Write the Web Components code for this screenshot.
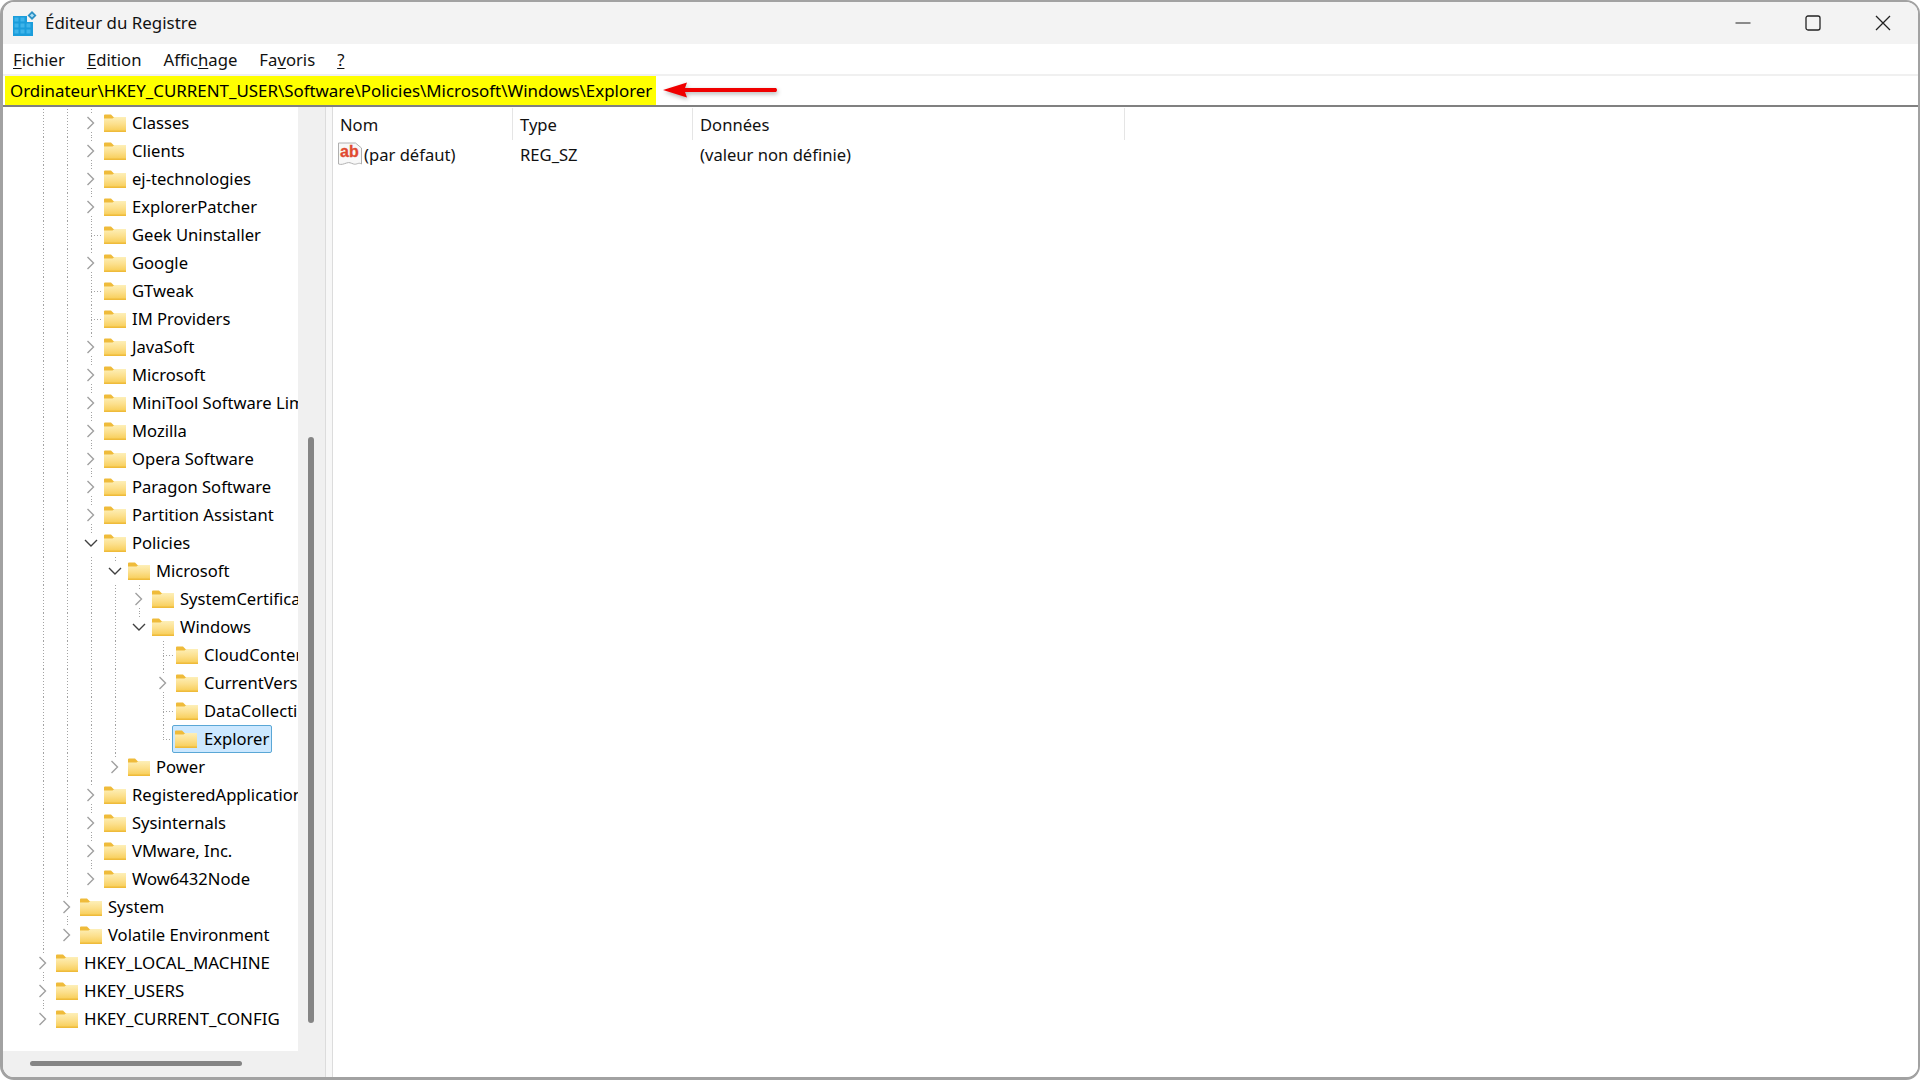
<!DOCTYPE html>
<html lang="fr">
<head>
<meta charset="utf-8">
<title>Éditeur du Registre</title>
<style>
  html, body { margin: 0; height: 100%; background: #fff; }
  body { font: 16.6px "Noto Sans", "Liberation Sans", sans-serif; color: #000; overflow: hidden; }
</style>
</head>
<body>

<reg-window>
  <reg-titlebar slot="top">Éditeur du Registre</reg-titlebar>
  <reg-menubar slot="top"></reg-menubar>
  <reg-address slot="top">Ordinateur\HKEY_CURRENT_USER\Software\Policies\Microsoft\Windows\Explorer</reg-address>
  <reg-tree slot="tree">
    <reg-key cells="vvc">Classes</reg-key>
    <reg-key cells="vvc">Clients</reg-key>
    <reg-key cells="vvc">ej-technologies</reg-key>
    <reg-key cells="vvc">ExplorerPatcher</reg-key>
    <reg-key cells="vvt">Geek Uninstaller</reg-key>
    <reg-key cells="vvc">Google</reg-key>
    <reg-key cells="vvt">GTweak</reg-key>
    <reg-key cells="vvt">IM Providers</reg-key>
    <reg-key cells="vvc">JavaSoft</reg-key>
    <reg-key cells="vvc">Microsoft</reg-key>
    <reg-key cells="vvc">MiniTool Software Limited</reg-key>
    <reg-key cells="vvc">Mozilla</reg-key>
    <reg-key cells="vvc">Opera Software</reg-key>
    <reg-key cells="vvc">Paragon Software</reg-key>
    <reg-key cells="vvc">Partition Assistant</reg-key>
    <reg-key cells="vvo">Policies</reg-key>
    <reg-key cells="vvvo">Microsoft</reg-key>
    <reg-key cells="vvvvc">SystemCertificates</reg-key>
    <reg-key cells="vvvvo">Windows</reg-key>
    <reg-key cells="vvvv_t">CloudContent</reg-key>
    <reg-key cells="vvvv_c">CurrentVersion</reg-key>
    <reg-key cells="vvvv_t">DataCollection</reg-key>
    <reg-key cells="vvvv_l" selected>Explorer</reg-key>
    <reg-key cells="vvve">Power</reg-key>
    <reg-key cells="vvc">RegisteredApplications</reg-key>
    <reg-key cells="vvc">Sysinternals</reg-key>
    <reg-key cells="vvc">VMware, Inc.</reg-key>
    <reg-key cells="vve">Wow6432Node</reg-key>
    <reg-key cells="vc">System</reg-key>
    <reg-key cells="ve">Volatile Environment</reg-key>
    <reg-key cells="c" wide>HKEY_LOCAL_MACHINE</reg-key>
    <reg-key cells="c" wide>HKEY_USERS</reg-key>
    <reg-key cells="e" wide>HKEY_CURRENT_CONFIG</reg-key>
  </reg-tree>
  <reg-values slot="list"></reg-values>
</reg-window>

<script>
  /* window frame: top bars, then tree and list side by side */
  class RegWindow extends HTMLElement {
    constructor () {
      super();
      this.attachShadow({ mode: 'open' }).innerHTML = `
        <style>
          :host { display: flex; flex-direction: column; box-sizing: border-box; width: 1920px; height: 1080px;
            border: solid #a2a2a2; border-width: 2px 2px 3px 3px; border-radius: 14px; overflow: hidden; background: #fff; }
          .body { flex: 1; display: flex; min-height: 0; }
          .split { width: 8px; box-sizing: border-box; background: #f7f7f7; border: solid #dcdcdc; border-width: 0 1px; }
          .arrow { position: absolute; left: 660px; top: 78px; filter: drop-shadow(1px 2px 2px rgba(0,0,0,.3)); }
        </style>
        <slot name="top"></slot>
        <div class="body">
          <slot name="tree"></slot>
          <div class="split"></div>
          <slot name="list"></slot>
        </div>
        <svg class="arrow" width="122" height="24" viewBox="0 0 122 24">
          <path d="M3 12 L27 4.5 L25 10 L116 10 Q118 12 116 14 L25 14 L27 19.5 Z" fill="#f00000"/>
        </svg>`;
    }
  }

  class RegTitlebar extends HTMLElement {
    constructor () {
      super();
      this.attachShadow({ mode: 'open' }).innerHTML = `
        <style>
          :host { display: flex; align-items: center; height: 42px; background: #f3f3f3; padding-left: 10px; font-size: 16.9px; color: #111; }
          .logo { margin-right: 8px; }
          .title { flex: 1; position: relative; top: -1px; }
          .btn { width: 70px; height: 42px; display: flex; align-items: center; justify-content: center; }
        </style>
        <svg class="logo" width="24" height="26" viewBox="0 0 24 26">
          <path d="M0 6h14v6h6v14H0z" fill="#1b9ddb"/>
          <path d="M1.5 7.5h4v4h-4zM7.5 7.5h4v4h-4zM1.5 13.5h4v4h-4zM7.5 13.5h4v4h-4zM13.5 13.5h4v4h-4zM1.5 19.5h4v4h-4zM7.5 19.5h4v4h-4zM13.5 19.5h4v4h-4z" fill="#3fb4ea"/>
          <path d="M19 1l4.5 4.5L19 10l-4.5-4.5z" fill="#2a8fc4"/>
          <path d="M19 3.4l2.1 2.1L19 7.6l-2.1-2.1z" fill="#a9def5"/>
        </svg>
        <span class="title"><slot></slot></span>
        <span class="btn"><svg width="16" height="16" viewBox="0 0 16 16"><path d="M.5 8h15" stroke="#222" stroke-width="1.2"/></svg></span>
        <span class="btn"><svg width="16" height="16" viewBox="0 0 16 16"><rect x="1" y="1" width="14" height="14" rx="2" fill="none" stroke="#222" stroke-width="1.3"/></svg></span>
        <span class="btn"><svg width="16" height="16" viewBox="0 0 16 16"><path d="M1 1l14 14M15 1L1 15" stroke="#222" stroke-width="1.3"/></svg></span>`;
    }
  }

  class RegMenubar extends HTMLElement {
    constructor () {
      super();
      this.attachShadow({ mode: 'open' }).innerHTML = `
        <style>
          :host { display: flex; align-items: center; height: 30px; padding: 1px 0 0 10px; box-sizing: border-box; gap: 22px; font-size: 16.7px; color: #111; }
          u { text-underline-offset: 2px; text-decoration-thickness: 1px; }
        </style>
        <span><u>F</u>ichier</span>
        <span><u>E</u>dition</span>
        <span>Affic<u>h</u>age</span>
        <span>Fa<u>v</u>oris</span>
        <span><u>?</u></span>`;
    }
  }

  class RegAddress extends HTMLElement {
    constructor () {
      super();
      this.attachShadow({ mode: 'open' }).innerHTML = `
        <style>
          :host { display: block; border-top: 2px solid #f0f0f0; border-bottom: 2px solid #808080; height: 29px; font-size: 16.9px; }
          .path { display: inline-block; height: 29px; line-height: 30px; background: #ffff00; padding: 0 4px 0 5px; margin-left: 2px; white-space: nowrap; }
        </style>
        <span class="path"><slot></slot></span>`;
    }
  }

  /* tree pane with its two scrollbars */
  class RegTree extends HTMLElement {
    constructor () {
      super();
      this.attachShadow({ mode: 'open' }).innerHTML = `
        <style>
          :host { display: grid; grid-template: 944px 26px / 295px 27px; width: 322px; background: #f0f0f0; }
          .keys { background: #fff; padding: 1.5px 0 0 28px; overflow: hidden; box-sizing: border-box; }
          .vbar { padding: 330px 0 0 10px; }
          .vbar i { display: block; width: 6px; height: 586px; border-radius: 3px; background: #858585; }
          .hbar { padding: 10px 0 0 27px; }
          .hbar i { display: block; width: 212px; height: 5px; border-radius: 3px; background: #858585; }
        </style>
        <div class="keys"><slot></slot></div>
        <div class="vbar"><i></i></div>
        <div class="hbar"><i></i></div>
        <div></div>`;
    }
  }

  /* one registry key. cells: one letter per indent column, v=guide _=empty,
     the last one is t=tee l=elbow c=closed e=closed and last o=open */
  const DOTS = 'stroke="#a3a3a3" stroke-dasharray="1 2" fill="none"';
  const CELLS = {
    v: `<path d="M12.5 0V28" ${DOTS}/>`,
    _: '',
    t: `<path d="M12.5 0V28M12 14.5H24" ${DOTS}/>`,
    l: `<path d="M12.5 0V14M12 14.5H24" ${DOTS}/>`,
    c: `<path d="M12.5 0V5M12.5 23V28" ${DOTS}/><path d="M8.5 8l6 6-6 6" fill="none" stroke="#a0a0a0" stroke-width="1.4"/>`,
    e: `<path d="M12.5 0V5" ${DOTS}/><path d="M8.5 8l6 6-6 6" fill="none" stroke="#a0a0a0" stroke-width="1.4"/>`,
    o: `<path d="M12.5 0V6" ${DOTS}/><path d="M6 11l6 6 6-6" fill="none" stroke="#404040" stroke-width="1.4"/>`
  };

  class RegKey extends HTMLElement {
    constructor () {
      super();
      this.attachShadow({ mode: 'open' }).innerHTML = `
        <style>
          :host { display: flex; height: 28px; white-space: nowrap; }
          :host([wide]) { font-size: 16.9px; }
          svg { flex: none; display: block; }
          .indent { display: flex; }
          .item { display: flex; align-items: center; height: 28px; box-sizing: border-box; padding-right: 3px; padding-left: 1px; border: 1px solid transparent; border-left-width: 0; border-right-width: 0; }
          .item svg { margin-right: 6px; }
          :host([selected]) .item { background: #cce8ff; border: 1px solid #5aa7d6; border-radius: 2px; padding-left: 2px; padding-right: 2px; margin-left: -3px; }
          :host([selected]) .item svg { margin-right: 7px; }
        </style>
        <div class="indent"></div>
        <div class="item">
          <svg width="22" height="18" viewBox="0 0 22 18">
            <defs><linearGradient id="f" x1="0" y1="0" x2="0" y2="1">
              <stop offset="0" stop-color="#fdefb8"/><stop offset=".55" stop-color="#fcdf8a"/><stop offset="1" stop-color="#f8cf5c"/>
            </linearGradient></defs>
            <path d="M0 1.5Q0 .5 1 .5h6l2.5 2.5H22V18H0z" fill="#efbb3a"/>
            <path d="M0 4.5h8.5l1.8-1.5H22V16.5H0z" fill="url(#f)"/>
          </svg>
          <span class="label"><slot></slot></span>
        </div>`;
    }

    connectedCallback () {
      const cells = this.getAttribute('cells') || '';
      this.shadowRoot.querySelector('.indent').innerHTML = cells.split('').map(function (c) {
        return '<svg width="24" height="28" viewBox="0 0 24 28">' + CELLS[c] + '</svg>';
      }).join('');
    }
  }

  /* the values list on the right */
  class RegValues extends HTMLElement {
    constructor () {
      super();
      this.attachShadow({ mode: 'open' }).innerHTML = `
        <style>
          :host { flex: 1; display: block; background: #fff; color: #111; }
          .row { display: grid; grid-template-columns: 180px 180px 432px; }
          .head { height: 33px; padding-top: 1px; box-sizing: border-box; }
          .head span { padding: 1px 0 0 7px; border-right: 1px solid #e5e5e5; line-height: 31px; height: 32px; box-sizing: border-box; }
          .body { height: 30px; line-height: 28px; }
          .body span { padding-left: 7px; display: flex; align-items: center; }
          .body span:first-child { padding-left: 5px; }
          svg { margin: -3px 2px 0 0; flex: none; }
          text { font: bold 16px "Liberation Sans", sans-serif; fill: #e04a30; stroke: #e04a30; stroke-width: .3; }
        </style>
        <div class="row head"><span>Nom</span><span>Type</span><span>Données</span></div>
        <div class="row body">
          <span>
            <svg width="24" height="24" viewBox="0 0 24 24">
              <path d="M.5 1h17l6 5v16c-3-2-5 1-8 0s-4-2-7-1-5 2-8 1z" fill="#f8f8f8" stroke="#b0b0b0"/>
              <text x="2" y="15">ab</text>
            </svg>(par défaut)
          </span>
          <span>REG_SZ</span>
          <span>(valeur non définie)</span>
        </div>`;
    }
  }

  customElements.define('reg-window', RegWindow);
  customElements.define('reg-titlebar', RegTitlebar);
  customElements.define('reg-menubar', RegMenubar);
  customElements.define('reg-address', RegAddress);
  customElements.define('reg-tree', RegTree);
  customElements.define('reg-key', RegKey);
  customElements.define('reg-values', RegValues);
</script>
</body>
</html>
